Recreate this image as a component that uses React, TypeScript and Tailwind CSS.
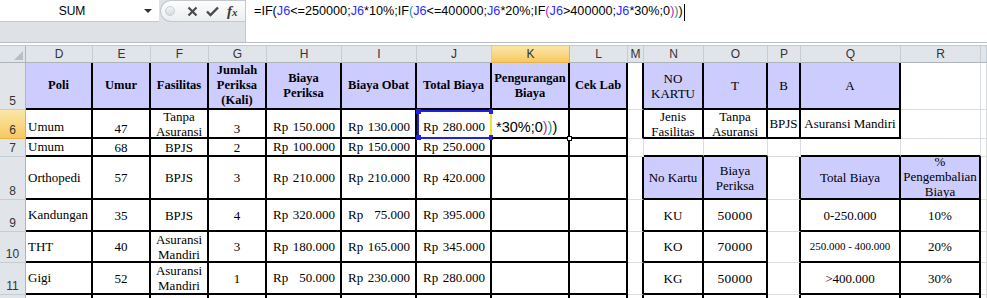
import type { ReactNode } from 'react'

type Edge = 'g' | 'k'

const serif = "font-['Liberation_Serif','Times_New_Roman',serif]"
const sans = "font-['Liberation_Sans',Arial,sans-serif]"

const HEAD = 'justify-center bg-[#ccccff] text-center text-[12.5px] font-bold leading-[15px]'
const HEAD2 = 'justify-center bg-[#ccccff] text-center text-[13px] leading-[15px]'
const MID = 'justify-center text-center leading-[15px]'
const LEFT = 'pl-[2px]'
const BOT = 'items-end pb-[1px]'

function Cell({
  r = 'g',
  b = 'g',
  className = '',
  children,
}: {
  r?: Edge
  b?: Edge
  className?: string
  children?: ReactNode
}) {
  return (
    <div
      className={`flex min-w-0 items-center whitespace-nowrap ${
        r === 'k' ? 'border-r-2 border-r-black' : 'border-r border-r-[#dadcdd]'
      } ${b === 'k' ? 'border-b-2 border-b-black' : 'border-b border-b-[#dadcdd]'} ${className}`}
    >
      {children}
    </div>
  )
}

function ColHead({ label, active }: { label: string; active?: boolean }) {
  return (
    <div
      className={`flex items-center justify-center border-r border-b text-[12px] text-[#333] ${sans} ${
        active
          ? 'border-r-[#e8b14a] border-b-[#e8b14a] bg-gradient-to-b from-[#fbe6a8] to-[#f6c95e]'
          : 'border-r-[#c6ccd3] border-b-[#aeb4bc] bg-[#e1e5ea]'
      }`}
    >
      {label}
    </div>
  )
}

function RowHead({ n, active }: { n?: number; active?: boolean }) {
  return (
    <div
      className={`flex items-end justify-center border-r border-b text-[12px] leading-[16px] text-[#333] ${sans} ${
        active
          ? 'border-r-[#e8b14a] border-b-[#e8b14a] bg-gradient-to-b from-[#fbe6a8] to-[#f6c95e]'
          : 'border-r-[#aeb4bc] border-b-[#c6ccd3] bg-[#e1e5ea]'
      }`}
    >
      {n}
    </div>
  )
}

function Money({ v }: { v: string }) {
  return (
    <div className="flex w-full justify-between pr-[5px] pl-[6px]">
      <span>Rp</span>
      <span>{v}</span>
    </div>
  )
}

const REF = 'text-[#2d2dff]'
const LV2 = 'text-[#129a86]'
const LV3 = 'text-[#b526b5]'

function FormulaBar() {
  return (
    <div className={`flex h-[43px] border-b border-b-[#b7bdc5] ${sans}`}>
      <div className="flex w-[245px] flex-col bg-[#dee2e7]">
        <div className="flex h-[22px]">
          <div className="flex w-[159px] items-center border-b border-b-[#c3c8cf] bg-white">
            <span className="w-[144px] text-center text-[12px] text-black">SUM</span>
            <span className="h-0 w-0 border-x-[4px] border-t-[4px] border-x-transparent border-t-[#333]" />
          </div>
          <div className="ml-[1px] flex flex-1 items-center rounded-l-full border border-r-0 border-[#c3c8cf] bg-gradient-to-b from-[#fdfdfe] to-[#eceef1]">
            <span className="ml-[4px] h-[10px] w-[10px] rounded-full border border-[#c9ccd1] bg-gradient-to-b from-[#f4f4f4] to-[#d8dadd]" />
            <svg className="ml-[12px]" width="11" height="11" viewBox="0 0 11 11">
              <path d="M1.5 1.5 L9.5 9.5 M9.5 1.5 L1.5 9.5" stroke="#4a4a4a" strokeWidth="2.2" />
            </svg>
            <svg className="ml-[8px]" width="13" height="11" viewBox="0 0 13 11">
              <path d="M1 5.5 L4.5 9 L12 1.5" stroke="#4a4a4a" strokeWidth="2.4" fill="none" />
            </svg>
            <span className={`ml-[8px] ${serif} text-[15px] font-bold italic text-[#3c3c3c]`}>
              f<span className="text-[11px]">x</span>
            </span>
          </div>
        </div>
      </div>
      <div className="flex flex-1 items-start border-l border-l-[#c3c8cf] bg-white pt-[4px] pl-[8px] text-[12.65px] leading-[15px] text-black">
        <span>
          =IF(<span className={REF}>J6</span>&lt;=250000;<span className={REF}>J6</span>*10%;IF
          <span className={LV2}>(</span>
          <span className={REF}>J6</span>&lt;=400000;<span className={REF}>J6</span>*20%;IF
          <span className={LV3}>(</span>
          <span className={REF}>J6</span>&gt;400000;<span className={REF}>J6</span>*30%;0
          <span className={LV3}>)</span>
          <span className={LV2}>)</span>)
        </span>
        <span className="ml-[1px] h-[17px] w-[1px] bg-black" />
      </div>
    </div>
  )
}

export default function App() {
  const cols = ['D', 'E', 'F', 'G', 'H', 'I', 'J', 'K', 'L', 'M', 'N', 'O', 'P', 'Q', 'R', '']
  return (
    <div className="h-[298px] w-[987px] overflow-hidden bg-white">
      <FormulaBar />
      <div className="h-[3px] border-b border-b-[#c3c8cf] bg-white" />
      <div
        className={`grid grid-cols-[26px_67px_58px_58px_58px_75px_75px_75px_78px_58px_16px_60px_64px_33px_100px_80px_1fr] grid-rows-[17px_47px_29px_18px_43px_32px_31px_32px_40px] text-[13px] text-black ${serif}`}
      >
        {/* column headers */}
        <div className="relative border-r border-b border-r-[#aeb4bc] border-b-[#aeb4bc] bg-[#e1e5ea]">
          <span className="absolute right-[2px] bottom-[2px] h-0 w-0 border-b-[9px] border-l-[9px] border-b-[#b9bec5] border-l-transparent" />
        </div>
        {cols.map((c) => (
          <ColHead key={c || 'S'} label={c} active={c === 'K'} />
        ))}

        {/* row 5 */}
        <RowHead n={5} />
        <Cell r="k" b="k" className={HEAD}>Poli</Cell>
        <Cell r="k" b="k" className={HEAD}>Umur</Cell>
        <Cell r="k" b="k" className={HEAD}>Fasilitas</Cell>
        <Cell r="k" b="k" className={HEAD}>
          Jumlah
          <br />
          Periksa
          <br />
          (Kali)
        </Cell>
        <Cell r="k" b="k" className={HEAD}>
          Biaya
          <br />
          Periksa
        </Cell>
        <Cell r="k" b="k" className={HEAD}>Biaya Obat</Cell>
        <Cell r="k" b="k" className={HEAD}>Total Biaya</Cell>
        <Cell r="k" b="k" className={HEAD}>
          Pengurangan
          <br />
          Biaya
        </Cell>
        <Cell r="k" b="k" className={HEAD}>Cek Lab</Cell>
        <Cell r="k" />
        <Cell r="k" b="k" className={HEAD2}>
          NO
          <br />
          KARTU
        </Cell>
        <Cell r="k" b="k" className={HEAD2}>T</Cell>
        <Cell r="k" b="k" className={HEAD2}>B</Cell>
        <Cell r="k" b="k" className={HEAD2}>A</Cell>
        <Cell />
        <Cell />

        {/* row 6 */}
        <RowHead n={6} active />
        <Cell r="k" b="k" className={`${LEFT} ${BOT}`}>Umum</Cell>
        <Cell r="k" b="k" className={`${MID} ${BOT}`}>47</Cell>
        <Cell r="k" b="k" className={MID}>
          Tanpa
          <br />
          Asuransi
        </Cell>
        <Cell r="k" b="k" className={`${MID} ${BOT}`}>3</Cell>
        <Cell r="k" b="k" className={BOT}>
          <Money v="150.000" />
        </Cell>
        <Cell r="k" b="k" className={BOT}>
          <Money v="130.000" />
        </Cell>
        <Cell r="k" b="k" className={`relative ${BOT}`}>
          <Money v="280.000" />
          <span className="absolute top-0 -right-[2px] -bottom-[2px] left-0 border-2 border-[#1f1fe6] border-r-[#f2e22e]" />
          <span className="absolute -top-[1px] -left-[1px] h-[5px] w-[5px] bg-[#1f1fe6]" />
          <span className="absolute -top-[1px] left-[72px] h-[5px] w-[4px] bg-[#1f1fe6]" />
          <span className="absolute top-[25px] -left-[1px] h-[5px] w-[5px] bg-[#1f1fe6]" />
          <span className="absolute top-[25px] left-[72px] h-[5px] w-[4px] bg-[#1f1fe6]" />
        </Cell>
        <Cell r="k" b="k" className={`relative items-end pb-[1px] pl-[4px] ${sans} text-[14.5px] leading-[17px]`}>
          <span>
            *30%;0<span className={LV3}>)</span>
            <span className={LV2}>)</span>)
          </span>
          <span className="absolute -right-[4px] -bottom-[4px] h-[5px] w-[5px] border border-black bg-white" />
        </Cell>
        <Cell r="k" b="k" />
        <Cell r="k" />
        <Cell r="k" b="k" className={MID}>
          Jenis
          <br />
          Fasilitas
        </Cell>
        <Cell r="k" b="k" className={MID}>
          Tanpa
          <br />
          Asuransi
        </Cell>
        <Cell r="k" b="k" className={MID}>BPJS</Cell>
        <Cell r="k" b="k" className={MID}>Asuransi Mandiri</Cell>
        <Cell />
        <Cell />

        {/* row 7 */}
        <RowHead n={7} />
        <Cell r="k" b="k" className={LEFT}>Umum</Cell>
        <Cell r="k" b="k" className={MID}>68</Cell>
        <Cell r="k" b="k" className={MID}>BPJS</Cell>
        <Cell r="k" b="k" className={MID}>2</Cell>
        <Cell r="k" b="k">
          <Money v="100.000" />
        </Cell>
        <Cell r="k" b="k">
          <Money v="150.000" />
        </Cell>
        <Cell r="k" b="k">
          <Money v="250.000" />
        </Cell>
        <Cell r="k" b="k" />
        <Cell r="k" b="k" />
        <Cell />
        <Cell b="k" />
        <Cell b="k" />
        <Cell />
        <Cell b="k" />
        <Cell b="k" />
        <Cell />

        {/* row 8 */}
        <RowHead n={8} />
        <Cell r="k" b="k" className={LEFT}>Orthopedi</Cell>
        <Cell r="k" b="k" className={MID}>57</Cell>
        <Cell r="k" b="k" className={MID}>BPJS</Cell>
        <Cell r="k" b="k" className={MID}>3</Cell>
        <Cell r="k" b="k">
          <Money v="210.000" />
        </Cell>
        <Cell r="k" b="k">
          <Money v="210.000" />
        </Cell>
        <Cell r="k" b="k">
          <Money v="420.000" />
        </Cell>
        <Cell r="k" b="k" />
        <Cell r="k" b="k" />
        <Cell r="k" />
        <Cell r="k" b="k" className={`${HEAD2} text-[12.5px]`}>No Kartu</Cell>
        <Cell r="k" b="k" className={`${HEAD2} text-[12.5px]`}>
          Biaya
          <br />
          Periksa
        </Cell>
        <Cell r="k" />
        <Cell r="k" b="k" className={`${HEAD2} text-[11.5px]`}>Total Biaya</Cell>
        <Cell r="k" b="k" className={`${HEAD2} pb-[2px] text-[11.5px] leading-[13.5px]`}>
          %
          <br />
          Pengembalian
          <br />
          Biaya
        </Cell>
        <Cell />

        {/* row 9 */}
        <RowHead n={9} />
        <Cell r="k" b="k" className={LEFT}>Kandungan</Cell>
        <Cell r="k" b="k" className={MID}>35</Cell>
        <Cell r="k" b="k" className={MID}>BPJS</Cell>
        <Cell r="k" b="k" className={MID}>4</Cell>
        <Cell r="k" b="k">
          <Money v="320.000" />
        </Cell>
        <Cell r="k" b="k">
          <Money v="75.000" />
        </Cell>
        <Cell r="k" b="k">
          <Money v="395.000" />
        </Cell>
        <Cell r="k" b="k" />
        <Cell r="k" b="k" />
        <Cell r="k" />
        <Cell r="k" b="k" className={MID}>KU</Cell>
        <Cell r="k" b="k" className={`${MID} text-[13.5px] tracking-[0.3px]`}>50000</Cell>
        <Cell r="k" />
        <Cell r="k" b="k" className={MID}>0-250.000</Cell>
        <Cell r="k" b="k" className={MID}>10%</Cell>
        <Cell />

        {/* row 10 */}
        <RowHead n={10} />
        <Cell r="k" b="k" className={LEFT}>THT</Cell>
        <Cell r="k" b="k" className={MID}>40</Cell>
        <Cell r="k" b="k" className={MID}>
          Asuransi
          <br />
          Mandiri
        </Cell>
        <Cell r="k" b="k" className={MID}>3</Cell>
        <Cell r="k" b="k">
          <Money v="180.000" />
        </Cell>
        <Cell r="k" b="k">
          <Money v="165.000" />
        </Cell>
        <Cell r="k" b="k">
          <Money v="345.000" />
        </Cell>
        <Cell r="k" b="k" />
        <Cell r="k" b="k" />
        <Cell r="k" />
        <Cell r="k" b="k" className={MID}>KO</Cell>
        <Cell r="k" b="k" className={`${MID} text-[13.5px] tracking-[0.3px]`}>70000</Cell>
        <Cell r="k" />
        <Cell r="k" b="k" className={`${MID} text-[11px]`}>250.000 - 400.000</Cell>
        <Cell r="k" b="k" className={MID}>20%</Cell>
        <Cell />

        {/* row 11 */}
        <RowHead n={11} />
        <Cell r="k" b="k" className={LEFT}>Gigi</Cell>
        <Cell r="k" b="k" className={MID}>52</Cell>
        <Cell r="k" b="k" className={MID}>
          Asuransi
          <br />
          Mandiri
        </Cell>
        <Cell r="k" b="k" className={MID}>1</Cell>
        <Cell r="k" b="k">
          <Money v="50.000" />
        </Cell>
        <Cell r="k" b="k">
          <Money v="230.000" />
        </Cell>
        <Cell r="k" b="k">
          <Money v="280.000" />
        </Cell>
        <Cell r="k" b="k" />
        <Cell r="k" b="k" />
        <Cell r="k" />
        <Cell r="k" b="k" className={MID}>KG</Cell>
        <Cell r="k" b="k" className={`${MID} text-[13.5px] tracking-[0.3px]`}>50000</Cell>
        <Cell r="k" />
        <Cell r="k" b="k" className={MID}>&gt;400.000</Cell>
        <Cell r="k" b="k" className={MID}>30%</Cell>
        <Cell />

        {/* row 12, only its top edge is in view */}
        <RowHead />
        <Cell r="k" b="k" />
        <Cell r="k" b="k" />
        <Cell r="k" b="k" />
        <Cell r="k" b="k" />
        <Cell r="k" b="k" />
        <Cell r="k" b="k" />
        <Cell r="k" b="k" />
        <Cell r="k" b="k" />
        <Cell r="k" b="k" />
        <Cell r="k" />
        <Cell r="k" b="k" />
        <Cell r="k" b="k" />
        <Cell r="k" />
        <Cell r="k" b="k" />
        <Cell r="k" b="k" />
        <Cell />
      </div>
    </div>
  )
}
